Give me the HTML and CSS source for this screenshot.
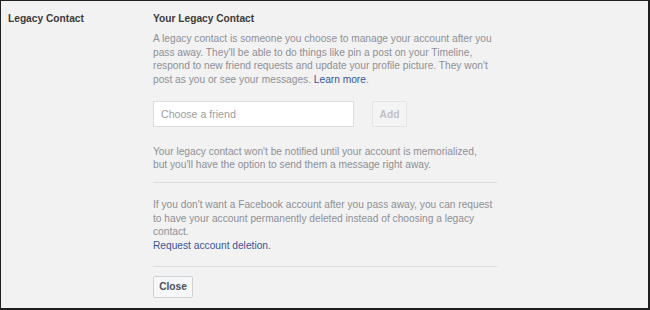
FILE: index.html
```html
<!DOCTYPE html>
<html lang="en">
<head>
<meta charset="utf-8">
<title>Legacy Contact</title>
<link rel="stylesheet" href="styles.css">
</head>
<body>
<div class="frame">
  <div class="row">
    <div class="label">Legacy Contact</div>
    <div class="content">
      <div class="title">Your Legacy Contact</div>
      <p class="text intro">A legacy contact is someone you choose to manage your account after you pass away. They'll be able to do things like pin a post on your Timeline, respond to new friend requests and update your profile picture. They won't post as you or see your messages. <a class="link" href="#">Learn more</a>.</p>
      <div class="picker">
        <input class="friend-input" type="text" placeholder="Choose a friend">
        <button class="btn btn-add" type="button" disabled>Add</button>
      </div>
      <p class="text note">Your legacy contact won't be notified until your account is memorialized, but you'll have the option to send them a message right away.</p>
      <div class="divider"></div>
      <p class="text delete">If you don't want a Facebook account after you pass away, you can request to have your account permanently deleted instead of choosing a legacy contact.<br><a class="link" href="#">Request account deletion.</a></p>
      <div class="divider divider-bottom"></div>
      <button class="btn btn-close" type="button">Close</button>
    </div>
  </div>
</div>
</body>
</html>
```

FILE: styles.css
```css
* { box-sizing: border-box; }

html, body {
  margin: 0;
  padding: 0;
  background: #1e1e1e;
}

body {
  width: 650px;
  height: 310px;
  overflow: hidden;
  font-family: "Liberation Sans", Arial, Helvetica, sans-serif;
  font-size: 10.2px;
  line-height: 13.4px;
}

.frame {
  width: 650px;
  height: 310px;
  background: #f2f2f2;
  border-top: 1px solid #202020;
  border-left: 1px solid #202020;
  border-right: 2px solid #1e1e1e;
  border-bottom: 2px solid #1e1e1e;
  padding: 11px 0 0 7px;
  overflow: hidden;
}

.row {
  display: grid;
  grid-template-columns: 145px 344px;
}

.label {
  font-weight: bold;
  color: #3a3a3a;
}

.title {
  font-weight: bold;
  color: #3a3a3a;
  margin-bottom: 7px;
}

.text {
  margin: 0;
  color: #8e9096;
}

.link {
  color: #3b5597;
  text-decoration: none;
}

.picker {
  display: flex;
  gap: 18px;
  margin-top: 15px;
  height: 26px;
}

.friend-input {
  width: 201px;
  height: 26px;
  margin: 0;
  border: 1px solid #dcdde0;
  background: #ffffff;
  padding: 0 7px;
  font-family: inherit;
  font-size: 10.6px;
  color: #333;
  outline: none;
}

.friend-input::placeholder {
  color: #9c9ea2;
}

.btn {
  margin: 0;
  font-family: inherit;
  font-weight: bold;
  font-size: 10.2px;
  padding: 0;
  border-radius: 2px;
}

.btn-add {
  width: 35px;
  height: 26px;
  background: #f4f4f5;
  border: 1px solid #e3e4e6;
  color: #bfc1c5;
}

.note {
  margin-top: 17.5px;
  max-width: 332px;
}

.divider {
  height: 1px;
  background: #dcdcdc;
  margin-top: 11px;
}

.delete {
  margin-top: 15px;
}

.divider-bottom {
  margin-top: 14px;
}

.btn-close {
  margin-top: 9px;
  width: 40px;
  height: 22px;
  background: #f6f7f9;
  border: 1px solid #cfd1d5;
  color: #4b4f56;
}
```
